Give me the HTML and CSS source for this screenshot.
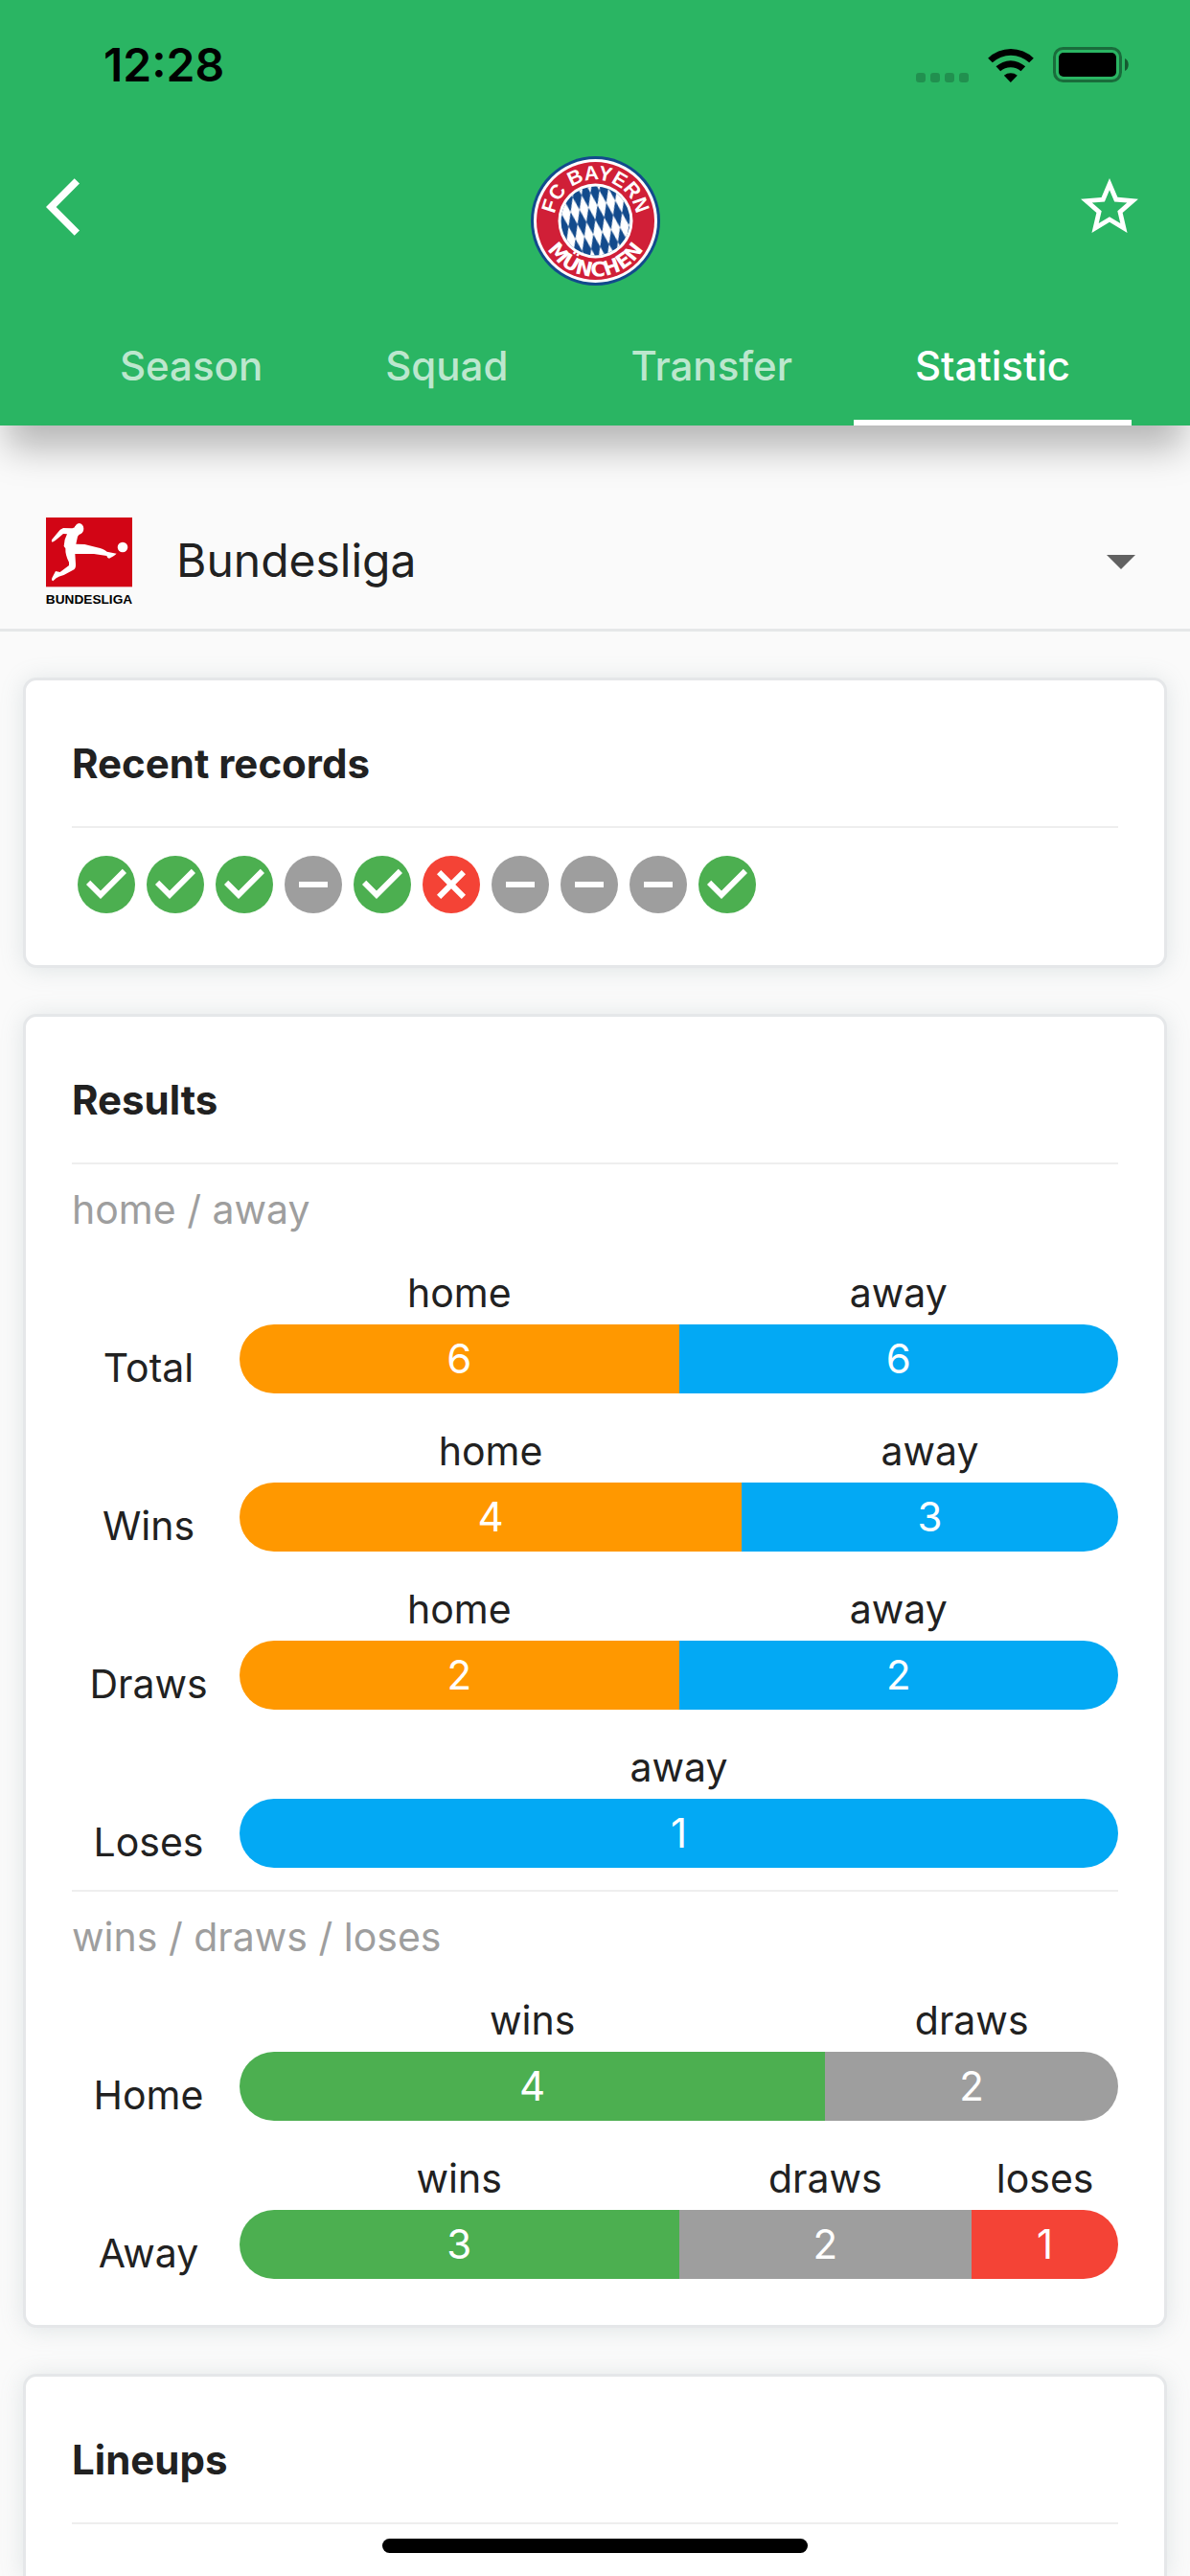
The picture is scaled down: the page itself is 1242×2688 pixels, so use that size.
FILE: index.html
```html
<!DOCTYPE html>
<html lang="en">
<head>
<meta charset="utf-8">
<meta name="viewport" content="width=device-width, initial-scale=1">
<title>FC Bayern München – Statistic</title>
<link rel="stylesheet" href="styles.css">
</head>
<body>
<svg class="sprite" aria-hidden="true">
  <symbol id="win" viewBox="0 0 24 24"><circle cx="12" cy="12" r="10" fill="#4caf50"/><path fill="#fff" d="M10 17l-5-5 1.41-1.41L10 14.17l7.59-7.59L19 8z"/></symbol>
  <symbol id="draw" viewBox="0 0 24 24"><circle cx="12" cy="12" r="10" fill="#9e9e9e"/><path fill="#fff" d="M7 11h10v2H7z"/></symbol>
  <symbol id="loss" viewBox="0 0 24 24"><circle cx="12" cy="12" r="10" fill="#f44336"/><path fill="#fff" d="M17 15.59L15.59 17 12 13.41 8.41 17 7 15.59 10.59 12 7 8.41 8.41 7 12 10.59 15.59 7 17 8.41 13.41 12z"/></symbol>
</svg>

<header class="header">
  <div class="status">
    <span class="status-time">12:28</span>
    <div class="status-icons">
      <svg class="signal" viewBox="0 0 55 10" aria-hidden="true"><rect width="10" height="10" rx="3"/><rect x="15" width="10" height="10" rx="3"/><rect x="30" width="10" height="10" rx="3"/><rect x="45" width="10" height="10" rx="3"/></svg>
      <svg class="wifi" viewBox="0 0 143 108" aria-hidden="true"><path d="M0 32A102 102 0 0 1 143 32L129 46A84 84 0 0 0 14 46zM25 58A68 68 0 0 1 117 58L103 73A48 48 0 0 0 39 73zM50 86A34 34 0 0 1 92 86L71 108z"/></svg>
      <svg class="battery" viewBox="0 0 80 37" aria-hidden="true"><rect x="1.5" y="1.5" width="69" height="34" rx="9" fill="none" stroke="#000" stroke-opacity=".4" stroke-width="3"/><rect x="6" y="6" width="60" height="25" rx="5"/><path d="M75 12c5 2 5 11 0 13z" fill-opacity=".5"/></svg>
    </div>
  </div>

  <div class="toolbar">
    <button class="icon-button" type="button" aria-label="Back">
      <svg class="icon" viewBox="0 0 24 24"><path d="M11.67 3.87L9.9 2.1 0 12l9.9 9.9 1.77-1.77L3.54 12z"/></svg>
    </button>
    <svg class="crest" viewBox="0 0 135 135" role="img" aria-label="FC Bayern München">
      <defs>
        <pattern id="lozenges" width="10" height="10" patternUnits="userSpaceOnUse" patternTransform="matrix(.93 -.24 .5 2.8 57.7 39.5)"><path d="M5 0L10 5 5 10 0 5z" fill="#fff"/></pattern>
        <path id="crest-top" d="M24.5 67.5A43 43 0 0 1 110.5 67.5"/>
        <path id="crest-bottom" d="M9.5 67.5A58 58 0 0 0 125.5 67.5"/>
      </defs>
      <circle cx="67.5" cy="67.5" r="67.5" fill="#124a8c"/>
      <circle cx="67.5" cy="67.5" r="64.5" fill="#fff"/>
      <circle cx="67.5" cy="67.5" r="61.5" fill="#d01f37"/>
      <circle cx="67.5" cy="67.5" r="39" fill="#fff"/>
      <circle cx="67.5" cy="67.5" r="36" fill="#124a8c"/>
      <circle cx="67.5" cy="67.5" r="36" fill="url(#lozenges)"/>
      <text class="crest-name"><textPath href="#crest-top" startOffset="50%">FC BAYERN</textPath></text>
      <text class="crest-city"><textPath href="#crest-bottom" startOffset="50%">MÜNCHEN</textPath></text>
    </svg>
    <button class="icon-button" type="button" aria-label="Add to favourites">
      <svg class="icon" viewBox="0 0 24 24"><path d="M22 9.24l-7.19-.62L12 2 9.19 8.63 2 9.24l5.46 4.73L5.82 21 12 17.27 18.18 21l-1.63-7.03L22 9.24zM12 15.4l-3.76 2.27 1-4.28-3.32-2.88 4.38-.38L12 6.1l1.71 4.04 4.38.38-3.32 2.88 1 4.28L12 15.4z"/></svg>
    </button>
  </div>

  <nav class="tabs" aria-label="Team">
    <a class="tab" href="#season">Season</a>
    <a class="tab" href="#squad">Squad</a>
    <a class="tab" href="#transfer">Transfer</a>
    <a class="tab tab-active" href="#statistic" aria-current="page">Statistic</a>
  </nav>
</header>

<div class="league">
  <svg class="league-logo" viewBox="0 0 270 270" role="img" aria-label="Bundesliga">
    <rect width="270" height="217" fill="#d20515"/>
    <g fill="#fff">
      <ellipse cx="104" cy="35" rx="14" ry="17"/>
      <circle cx="240" cy="93" r="16"/>
      <path d="M18 70L36 48Q44 36 54 33L82 34Q90 32 92 26L110 50Q102 52 99 60L94 83L121 84L160 94Q180 98 191 107L221 113Q214 121 198 128Q192 128 190 120L150 114L91 114L93 145Q94 158 88 163L56 180Q40 184 32 190L22 199Q16 197 19 189L30 168L44 171L72 150L72 140Q60 118 61 97L56 90Q56 70 66 52L54 51Q44 60 29 72L20 77Q16 76 18 70z"/>
    </g>
    <text class="league-logo-text" x="135" y="269">BUNDESLIGA</text>
  </svg>
  <select class="league-select" aria-label="League"><option>Bundesliga</option></select>
  <svg class="icon league-arrow" viewBox="0 0 24 24" aria-hidden="true"><path d="M7 10l5 5 5-5z"/></svg>
</div>

<main class="cards">
  <section class="card">
    <h2 class="card-title">Recent records</h2>
    <ul class="records">
      <li><svg class="icon" role="img" aria-label="win"><use href="#win"/></svg></li>
      <li><svg class="icon" role="img" aria-label="win"><use href="#win"/></svg></li>
      <li><svg class="icon" role="img" aria-label="win"><use href="#win"/></svg></li>
      <li><svg class="icon" role="img" aria-label="draw"><use href="#draw"/></svg></li>
      <li><svg class="icon" role="img" aria-label="win"><use href="#win"/></svg></li>
      <li><svg class="icon" role="img" aria-label="loss"><use href="#loss"/></svg></li>
      <li><svg class="icon" role="img" aria-label="draw"><use href="#draw"/></svg></li>
      <li><svg class="icon" role="img" aria-label="draw"><use href="#draw"/></svg></li>
      <li><svg class="icon" role="img" aria-label="draw"><use href="#draw"/></svg></li>
      <li><svg class="icon" role="img" aria-label="win"><use href="#win"/></svg></li>
    </ul>
  </section>

  <section class="card">
    <h2 class="card-title">Results</h2>
    <div class="group">
      <h3 class="group-title">home / away</h3>
      <div class="rows">
        <div class="row">
          <span class="row-label">Total</span>
          <div class="bar">
            <div class="part" style="flex-grow:6"><span>home</span><span class="fill home">6</span></div>
            <div class="part" style="flex-grow:6"><span>away</span><span class="fill away">6</span></div>
          </div>
        </div>
        <div class="row">
          <span class="row-label">Wins</span>
          <div class="bar">
            <div class="part" style="flex-grow:4"><span>home</span><span class="fill home">4</span></div>
            <div class="part" style="flex-grow:3"><span>away</span><span class="fill away">3</span></div>
          </div>
        </div>
        <div class="row">
          <span class="row-label">Draws</span>
          <div class="bar">
            <div class="part" style="flex-grow:2"><span>home</span><span class="fill home">2</span></div>
            <div class="part" style="flex-grow:2"><span>away</span><span class="fill away">2</span></div>
          </div>
        </div>
        <div class="row">
          <span class="row-label">Loses</span>
          <div class="bar">
            <div class="part" style="flex-grow:1"><span>away</span><span class="fill away">1</span></div>
          </div>
        </div>
      </div>
    </div>
    <div class="group group-next">
      <h3 class="group-title">wins / draws / loses</h3>
      <div class="rows">
        <div class="row">
          <span class="row-label">Home</span>
          <div class="bar">
            <div class="part" style="flex-grow:4"><span>wins</span><span class="fill wins">4</span></div>
            <div class="part" style="flex-grow:2"><span>draws</span><span class="fill draws">2</span></div>
          </div>
        </div>
        <div class="row">
          <span class="row-label">Away</span>
          <div class="bar">
            <div class="part" style="flex-grow:3"><span>wins</span><span class="fill wins">3</span></div>
            <div class="part" style="flex-grow:2"><span>draws</span><span class="fill draws">2</span></div>
            <div class="part" style="flex-grow:1"><span>loses</span><span class="fill loses">1</span></div>
          </div>
        </div>
      </div>
    </div>
  </section>

  <section class="card card-last">
    <h2 class="card-title">Lineups</h2>
  </section>
</main>

<div class="home-indicator" aria-hidden="true"></div>
</body>
</html>
```
FILE: styles.css
```css
* { box-sizing: border-box; }

body {
  margin: 0;
  min-height: 100vh;
  display: flex;
  flex-direction: column;
  background: #fafafa;
  color: #212121;
  font-family: Inter, "Liberation Sans", sans-serif;
  font-size: 41px;
  line-height: 48px;
}

svg { display: block; }
.sprite { display: none; }
.icon { width: 72px; height: 72px; fill: currentColor; }

/* Header */
.header {
  background: #2ab563;
  color: #fff;
  box-shadow: 0 31px 36px -7px rgba(0, 0, 0, .27);
}
.status {
  height: 132px;
  padding: 3px 63px 0 108px;
  display: flex;
  justify-content: space-between;
  align-items: center;
  color: #000;
}
.status-time { font-size: 48px; font-weight: 600; line-height: 52px; }
.status-icons { display: flex; align-items: flex-end; gap: 20px; }
.signal { width: 55px; height: 10px; fill-opacity: .2; }
.wifi { width: 48px; height: 36px; }
.battery { width: 80px; height: 37px; }

.toolbar {
  height: 168px;
  padding: 0 48px;
  display: grid;
  grid-template-columns: 1fr auto 1fr;
  align-items: center;
}
.icon-button {
  padding: 0;
  border: 0;
  background: none;
  color: inherit;
}
.icon-button:first-child { justify-self: start; }
.icon-button:last-child { justify-self: end; }
.crest { width: 135px; height: 135px; margin-bottom: 2px; align-self: end; }
.crest text { fill: #fff; font-weight: 700; text-anchor: middle; }
.crest-name { font-family: "Liberation Sans", sans-serif; font-size: 21px; }
.crest-city { font-family: "DejaVu Sans", sans-serif; font-size: 21px; }

.tabs { display: flex; justify-content: center; }
.tab {
  padding: 58px 64px 32px;
  border-bottom: 6px solid transparent;
  color: rgba(255, 255, 255, .7);
  font-size: 42px;
  font-weight: 500;
  text-decoration: none;
}
.tab-active { color: #fff; border-color: #fff; }

/* League picker */
.league {
  padding: 96px 36px 26px 48px;
  border-bottom: 3px solid #e5e7e8;
  display: grid;
  grid-template-columns: 90px 1fr 72px;
  align-items: center;
}
.league-logo { width: 90px; height: 90px; overflow: visible; }
.league-logo-text {
  font-family: "Liberation Sans", sans-serif;
  font-size: 41px;
  font-weight: 700;
  text-anchor: middle;
}
.league-select {
  grid-column: 2 / 4;
  grid-row: 1;
  padding: 0 72px 0 46px;
  border: 0;
  background: none;
  color: inherit;
  font: inherit;
  font-size: 48px;
  line-height: 58px;
  appearance: none;
}
.league-arrow {
  grid-column: 3;
  grid-row: 1;
  color: #616161;
  pointer-events: none;
}

/* Cards */
.cards {
  flex: 1;
  padding: 48px 24px 0;
  display: flex;
  flex-direction: column;
  gap: 48px;
}
.card {
  padding: 48px;
  border: 3px solid #e5e7e9;
  border-radius: 14px;
  background: #fff;
  box-shadow: 0 2px 24px rgba(120, 144, 150, .2);
}
.card-last {
  flex: 1;
  border-bottom: 0;
  border-radius: 14px 14px 0 0;
}
.card-title {
  margin: 0;
  padding: 15px 0 41px;
  border-bottom: 2px solid #eeeeee;
  font-size: 42px;
  font-weight: 700;
}
.records {
  margin: 23px 0 0;
  padding: 0;
  display: flex;
  list-style: none;
}

.group { padding-top: 23px; }
.group-next { margin-top: 23px; border-top: 2px solid #eeeeee; }
.group-title {
  margin: 0 0 39px;
  color: #9e9e9e;
  font-size: 41px;
  font-weight: 400;
}
.rows { display: grid; gap: 36px; }
.row {
  display: grid;
  grid-template-columns: 160px 1fr;
  column-gap: 15px;
  align-items: end;
}
.row-label { padding-bottom: 3px; text-align: center; }
.bar { display: flex; }
.part {
  flex: 1 1 0;
  display: grid;
  gap: 9px;
  text-align: center;
}
.fill { color: #fff; font-size: 42px; line-height: 72px; }
.part:first-child .fill { border-radius: 36px 0 0 36px; }
.part:last-child .fill { border-radius: 0 36px 36px 0; }
.part:only-child .fill { border-radius: 36px; }
.home { background: #ff9800; }
.away { background: #03a9f4; }
.wins { background: #4caf50; }
.draws { background: #9e9e9e; }
.loses { background: #f44336; }

.home-indicator {
  position: fixed;
  bottom: 24px;
  left: 50%;
  width: 444px;
  height: 15px;
  margin-left: -222px;
  border-radius: 8px;
  background: #000;
}
```
